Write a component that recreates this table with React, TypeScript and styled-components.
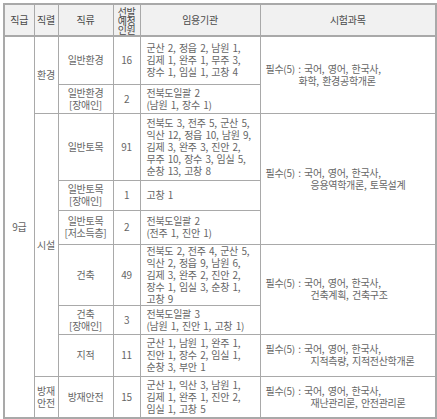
import React from "react";
import styled, { createGlobalStyle } from "styled-components";

const Global = createGlobalStyle`
  html, body { margin: 0; padding: 0; background: #fff; }
  body { font-family: "Noto Sans CJK KR", "Noto Sans", sans-serif; }
`;

const Wrap = styled.div`
  padding: 3px 0 0 3px;
`;

const Table = styled.table`
  border-collapse: collapse;
  table-layout: fixed;
  width: 432px;
  border: 2px solid #a9a9a9;
  font-size: 10px;
  letter-spacing: -0.3px;
  word-spacing: 1.5px;
  color: #666;
`;

const HeadRow = styled.tr`
  height: 32px;
  background: #f1f1f1;
`;

const Row = styled.tr<{ $h: number }>`
  height: ${(p) => p.$h}px;
`;

const Th = styled.th`
  border: 1px solid #a9a9a9;
  border-bottom: 2px solid #a9a9a9;
  font-weight: normal;
  color: #4a4a4a;
  padding: 0;
  line-height: 12px;
  text-align: center;
  vertical-align: middle;
`;

const Stack = styled.div`
  line-height: 9px;
  letter-spacing: -0.5px;
  margin-top: 1px;
`;

const Td = styled.td<{ $left?: number }>`
  border: 1px solid #a9a9a9;
  padding: 0 0 0 ${(p) => p.$left ?? 0}px;
  line-height: 12px;
  text-align: ${(p) => (p.$left !== undefined ? "left" : "center")};
  vertical-align: middle;
  white-space: nowrap;
  overflow: hidden;
`;

const Line = styled.div<{ $indent?: number }>`
  padding-left: ${(p) => p.$indent ?? 0}px;
`;

type Exam = { rows: number; second: string; indent: number };

type Item = {
  series?: { name: string[]; rows: number };
  exam?: Exam;
  kind: string[];
  count: number;
  orgs: string[];
  h: number;
};

const items: Item[] = [
  {
    series: { name: ["환경"], rows: 2 },
    exam: { rows: 2, second: "화학, 환경공학개론", indent: 33 },
    kind: ["일반환경"],
    count: 16,
    orgs: ["군산 2, 정읍 2, 남원 1,", "김제 1, 완주 1, 무주 3,", "장수 1, 임실 1, 고창 4"],
    h: 48,
  },
  {
    kind: ["일반환경", "[장애인]"],
    count: 2,
    orgs: ["전북도일괄 2", "(남원 1, 장수 1)"],
    h: 29,
  },
  {
    series: { name: ["시설"], rows: 6 },
    exam: { rows: 3, second: "응용역학개론, 토목설계", indent: 45 },
    kind: ["일반토목"],
    count: 91,
    orgs: [
      "전북도 3, 전주 5, 군산 5,",
      "익산 12, 정읍 10, 남원 9,",
      "김제 3, 완주 3, 진안 2,",
      "무주 10, 장수 3, 임실 5,",
      "순창 13, 고창 8",
    ],
    h: 67,
  },
  {
    kind: ["일반토목", "[장애인]"],
    count: 1,
    orgs: ["고창 1"],
    h: 30,
  },
  {
    kind: ["일반토목", "[저소득층]"],
    count: 2,
    orgs: ["전북도일괄 2", "(전주 1, 진안 1)"],
    h: 34,
  },
  {
    exam: { rows: 2, second: "건축계획, 건축구조", indent: 45 },
    kind: ["건축"],
    count: 49,
    orgs: [
      "전북도 2, 전주 4, 군산 5,",
      "익산 2, 정읍 9, 남원 6,",
      "김제 3, 완주 2, 진안 2,",
      "장수 1, 임실 3, 순창 1,",
      "고창 9",
    ],
    h: 60,
  },
  {
    kind: ["건축", "[장애인]"],
    count: 3,
    orgs: ["전북도일괄 3", "(남원 1, 진안 1, 고창 1)"],
    h: 29,
  },
  {
    exam: { rows: 1, second: "지적측량, 지적전산학개론", indent: 45 },
    kind: ["지적"],
    count: 11,
    orgs: ["군산 1, 남원 1, 완주 1,", "진안 1, 장수 2, 임실 1,", "순창 3, 부안 1"],
    h: 42,
  },
  {
    series: { name: ["방재", "안전"], rows: 1 },
    exam: { rows: 1, second: "재난관리론, 안전관리론", indent: 45 },
    kind: ["방재안전"],
    count: 15,
    orgs: ["군산 1, 익산 3, 남원 1,", "김제 1, 완주 1, 진안 2,", "임실 1, 고창 5"],
    h: 42,
  },
];

const Lines = ({ lines }: { lines: string[] }) => (
  <>
    {lines.map((l, i) => (
      <Line key={i}>{l}</Line>
    ))}
  </>
);

export default function App() {
  return (
    <>
      <Global />
      <Wrap>
        <Table>
          <colgroup>
            <col style={{ width: 30 }} />
            <col style={{ width: 24 }} />
            <col style={{ width: 55 }} />
            <col style={{ width: 27 }} />
            <col style={{ width: 120 }} />
            <col style={{ width: 176 }} />
          </colgroup>
          <thead>
            <HeadRow>
              <Th>직급</Th>
              <Th>직렬</Th>
              <Th>직류</Th>
              <Th>
                <Stack>
                  <div>선발</div>
                  <div>예정</div>
                  <div>인원</div>
                </Stack>
              </Th>
              <Th>임용기관</Th>
              <Th>시험과목</Th>
            </HeadRow>
          </thead>
          <tbody>
            {items.map((it, i) => (
              <Row key={i} $h={it.h}>
                {i === 0 && <Td rowSpan={items.length}>9급</Td>}
                {it.series && (
                  <Td rowSpan={it.series.rows}>
                    <Lines lines={it.series.name} />
                  </Td>
                )}
                <Td>
                  <Lines lines={it.kind} />
                </Td>
                <Td>{it.count}</Td>
                <Td $left={6}>
                  <Lines lines={it.orgs} />
                </Td>
                {it.exam && (
                  <Td rowSpan={it.exam.rows} $left={5}>
                    <Line>필수(5) : 국어, 영어, 한국사,</Line>
                    <Line $indent={it.exam.indent}>{it.exam.second}</Line>
                  </Td>
                )}
              </Row>
            ))}
          </tbody>
        </Table>
      </Wrap>
    </>
  );
}
